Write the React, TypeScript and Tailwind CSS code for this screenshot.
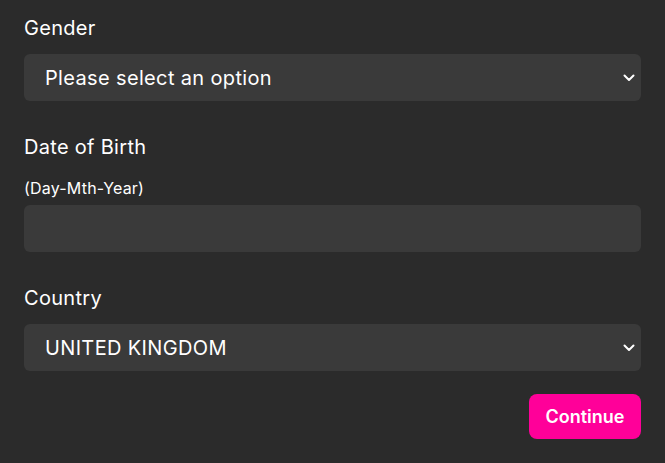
import React from "react";

function Chevron() {
  return (
    <svg width="12" height="8" viewBox="0 0 12 8" fill="none" className="shrink-0">
      <path d="M1.5 1.5L6 6L10.5 1.5" stroke="#ffffff" strokeWidth="2" strokeLinecap="round" strokeLinejoin="round" />
    </svg>
  );
}

function SelectBox({ value }: { value: string }) {
  return (
    <div className="h-[47px] rounded-[6px] bg-[#3a3a3a] flex items-center justify-between pl-[21px] pr-[6px]">
      <span className="text-[20px] tracking-[0.35px] text-white">{value}</span>
      <Chevron />
    </div>
  );
}

export default function App() {
  return (
    <div
      className="w-[665px] h-[463px] bg-[#2b2b2b] text-white px-6 pt-[14px]"
      style={{ fontFamily: "Inter, 'Noto Sans', sans-serif" }}
    >
      <div className="flex flex-col">
        <div className="text-[20px] tracking-[0.3px] leading-[28px] mb-[12px]">Gender</div>
        <SelectBox value="Please select an option" />

        <div className="text-[20px] tracking-[0.3px] leading-[28px] mt-[32px]">Date of Birth</div>
        <div className="text-[16px] tracking-[0.2px] leading-[20px] mt-[17px] mb-[7px]">(Day-Mth-Year)</div>
        <div className="h-[47px] rounded-[6px] bg-[#3a3a3a]" />

        <div className="text-[20px] tracking-[0.3px] leading-[28px] mt-[32px] mb-[12px]">Country</div>
        <SelectBox value="UNITED KINGDOM" />

        <div className="flex justify-end mt-[23px]">
          <button className="w-[112px] h-[45px] rounded-[8px] bg-[#ff0099] text-white text-[18px] font-semibold">
            Continue
          </button>
        </div>
      </div>
    </div>
  );
}
